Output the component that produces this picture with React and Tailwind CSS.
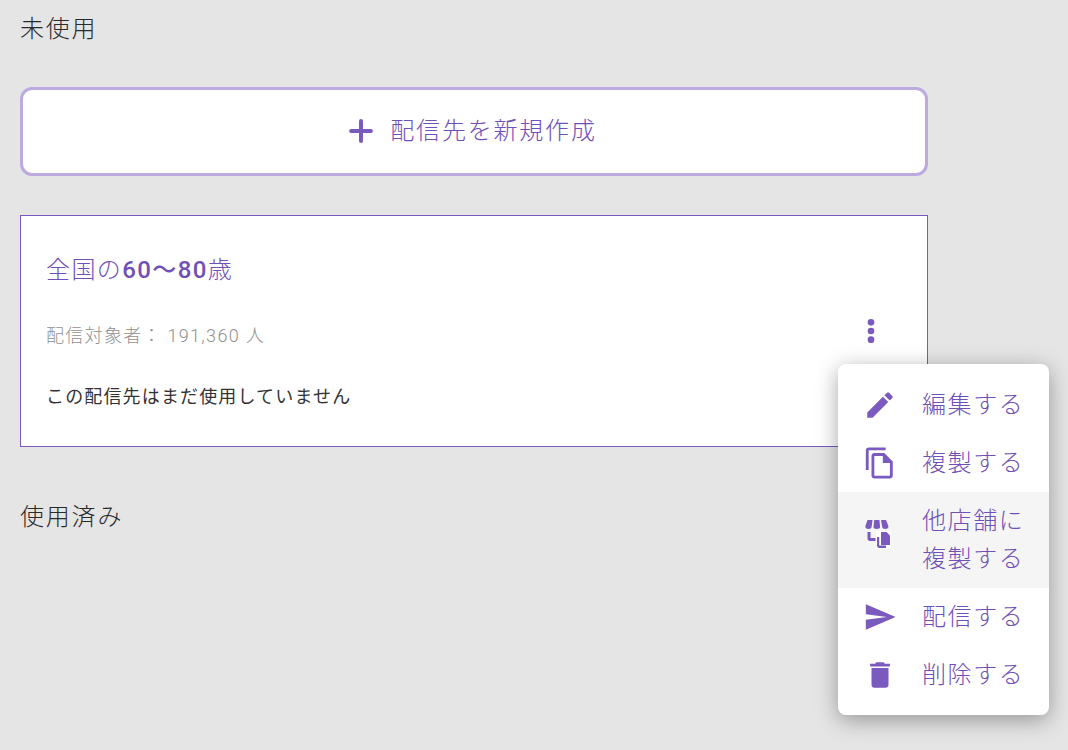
import React from "react";
import { Plus } from "lucide-react";

const font = { fontFamily: '"Roboto", "Noto Sans CJK JP", sans-serif' };

const menuItems = [
  {
    label: "編集する",
    icon: (
      <svg viewBox="0 0 24 24" className="w-[34px] h-[34px] fill-current">
        <path d="M3 17.25V21h3.75L17.81 9.94l-3.75-3.75L3 17.25zM20.71 7.04a1 1 0 0 0 0-1.41l-2.34-2.34a1 1 0 0 0-1.41 0l-1.83 1.83 3.75 3.75 1.83-1.83z" />
      </svg>
    ),
  },
  {
    label: "複製する",
    icon: (
      <svg viewBox="0 0 24 24" className="w-[34px] h-[34px] fill-current">
        <path d="M16 1H4c-1.1 0-2 .9-2 2v14h2V3h12V1zm-1 4H8c-1.1 0-2 .9-2 2v14c0 1.1.9 2 2 2h11c1.1 0 2-.9 2-2V11l-6-6zM8 21V7h6v5h5v9H8z" />
      </svg>
    ),
  },
  {
    label: "他店舗に\n複製する",
    active: true,
    icon: (
      <svg viewBox="0 0 28 32" className="ml-[-6px] mb-[12px] w-[28px] h-[32px] fill-current">
        <path d="M4.5 2h5L8.6 9c-.2 1.2-1.3 2-2.9 2C3.4 11 2 9.8 2.4 8L4.5 2z" />
        <path d="M11.2 2h5.2l.7 7c.1 1.2-1.2 2-3.3 2s-3.4-.8-3.3-2l.7-7z" />
        <path d="M18 2h5l2.4 6c.4 1.8-1 3-3.3 3-1.6 0-2.7-.8-2.9-2L18 2z" />
        <path d="M4.5 14h3v6h5v3H7c-1.4 0-2.5-1-2.5-2.4V14z" />
        <rect x="13" y="13" width="15" height="18" fill="#ffffff" />
        <path d="M14 19h2.2v8.5H23V30h-6.8c-1.2 0-2.2-1-2.2-2.2V19z" />
        <path d="M18 14h5.5l3.5 3.5V27h-9V14z" />
      </svg>
    ),
  },
  {
    label: "配信する",
    icon: (
      <svg viewBox="0 0 24 24" className="w-[36px] h-[36px] fill-current">
        <path d="M2.01 21 23 12 2.01 3 2 10l15 2-15 2z" />
      </svg>
    ),
  },
  {
    label: "削除する",
    icon: (
      <svg viewBox="0 0 24 24" className="w-[34px] h-[34px] fill-current">
        <path d="M6 19c0 1.1.9 2 2 2h8c1.1 0 2-.9 2-2V7H6v12zM19 4h-3.5l-1-1h-5l-1 1H5v2h14V4z" />
      </svg>
    ),
  },
];

const App = () => {
  return (
    <div className="relative w-[1068px] h-[750px] overflow-hidden bg-[#e5e5e5] pl-5 pt-[11px] font-light" style={font}>
      <div className="w-[908px]">
        <h2 className="text-2xl font-light leading-9 tracking-[1.8px] text-[#2b2b2b]">未使用</h2>

        <button className="mt-[40px] flex h-[89px] w-full items-center justify-center gap-[12px] rounded-xl border-[3px] border-[#bcaae0] bg-white pb-[2px] pr-[5px] text-2xl font-light tracking-[1.8px] text-[#7050b8]">
          <Plus size={34} strokeWidth={2.8} className="ml-[-2px] text-[#7a5abf]" />
          配信先を新規作成
        </button>

        <div className="mt-[39px] h-[232px] border border-[#7a5abf] bg-white px-[25px] pt-[36px]">
          <div className="text-2xl font-light leading-9 tracking-[1.4px] text-[#7050b8]">
            全国の<span className="font-medium">60〜80</span>歳
          </div>
          <div className="mt-[34px] flex h-[28px] items-center justify-between">
            <div className="text-lg leading-7 tracking-[1.3px] text-[#909090]">配信対象者： 191,360 人</div>
            <svg viewBox="0 0 24 24" className="mr-[11px] mt-[-11px] h-[40px] w-[40px] fill-[#7a5abf]">
              <circle cx="12" cy="6.8" r="2" />
              <circle cx="12" cy="12" r="2" />
              <circle cx="12" cy="17.2" r="2" />
            </svg>
          </div>
          <div className="mt-[33px] text-lg font-normal leading-7 tracking-[1.15px] text-[#333333]">
            この配信先はまだ使用していません
          </div>
        </div>

        <h2 className="mt-[52px] text-2xl font-light leading-9 tracking-[1.8px] text-[#2b2b2b]">使用済み</h2>
      </div>

      <ul className="absolute left-[838px] top-[364px] w-[211px] rounded-lg bg-white pt-[12px] pb-[11px] text-[#7a5abf] shadow-[0_5px_22px_rgba(0,0,0,0.35)]">
        {menuItems.map((item) => (
          <li
            key={item.label}
            className={`flex items-center py-[10px] pl-[25px] ${item.active ? "bg-[#f5f5f5]" : ""}`}
          >
            <span className="flex w-[34px] justify-center">{item.icon}</span>
            <span className="ml-[25px] whitespace-pre-line text-2xl font-light leading-[38px] tracking-[1.6px] text-[#7050b8]">
              {item.label}
            </span>
          </li>
        ))}
      </ul>
    </div>
  );
};

export default App;
